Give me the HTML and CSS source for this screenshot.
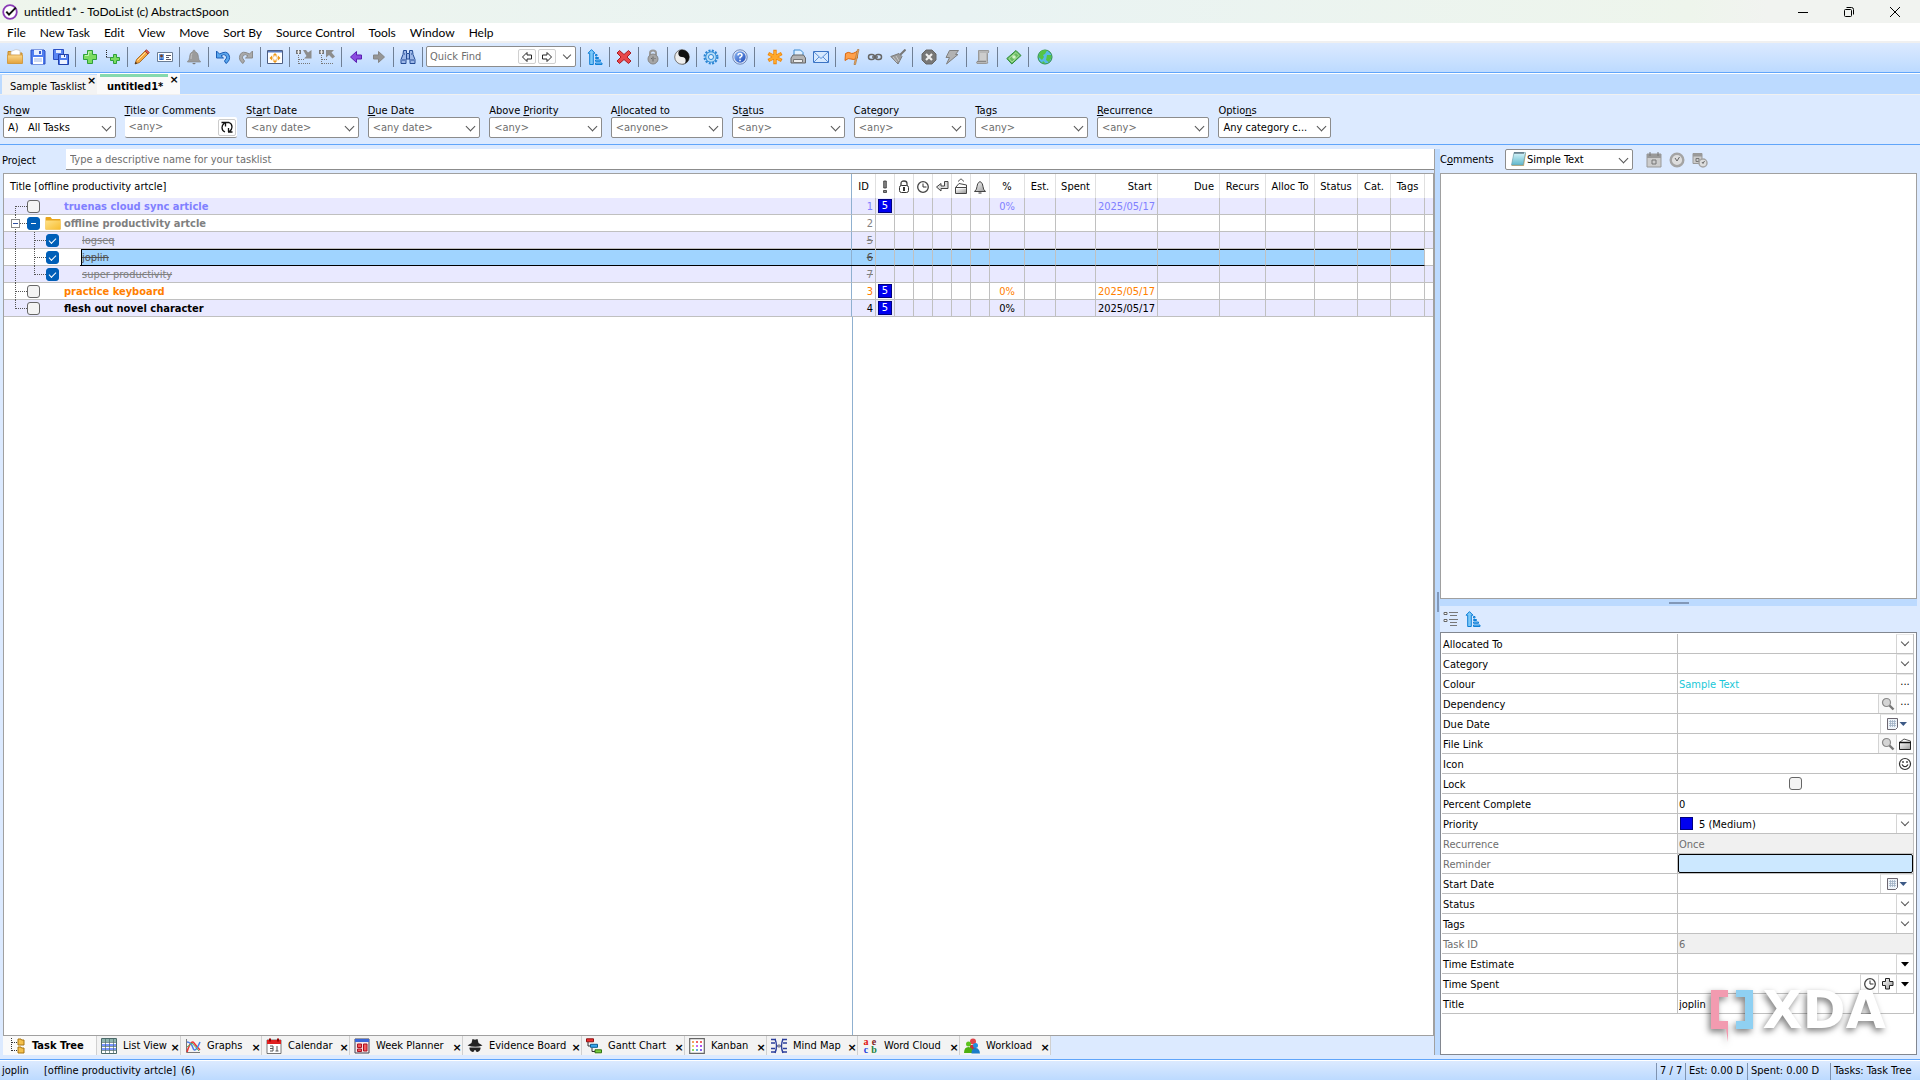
FILE: index.html
```html
<!DOCTYPE html>
<html lang="en">
<head>
<meta charset="utf-8">
<title>untitled1* - ToDoList (c) AbstractSpoon</title>
<link rel="stylesheet" href="styles.css">
</head>
<body>
<svg class="defs" width="0" height="0" aria-hidden="true">
  <defs>
    <linearGradient id="gFolder" x1="0" y1="0" x2="0" y2="1"><stop offset="0" stop-color="#fbd88c"/><stop offset="1" stop-color="#e3a23c"/></linearGradient>
    <linearGradient id="gYellow" x1="0" y1="0" x2="1" y2="1"><stop offset="0" stop-color="#ffe289"/><stop offset="1" stop-color="#f7bd2f"/></linearGradient>
    <linearGradient id="gGray" x1="0" y1="0" x2="1" y2="1"><stop offset="0" stop-color="#fff"/><stop offset="1" stop-color="#999"/></linearGradient>
    <linearGradient id="gBlue" x1="0" y1="0" x2="1" y2="1"><stop offset="0" stop-color="#8bb7f5"/><stop offset="1" stop-color="#1c49b8"/></linearGradient>
    <linearGradient id="gPad" x1="0" y1="0" x2="0" y2="1"><stop offset="0" stop-color="#d9f6fb"/><stop offset="1" stop-color="#5fb8cc"/></linearGradient>
  </defs>
  <symbol id="app" viewBox="0 0 16 16"><circle cx="8" cy="8" r="6.800" fill="#fff" stroke="#8a3bb5" stroke-width="1.800"/><path d="M4.300 7.600 7 10.600 13.800 3.600" fill="none" stroke="#111" stroke-width="2"/></symbol>
  <symbol id="folder" viewBox="0 0 16 16"><path d="M1 2.500h5l1 1.500h8v10H1z" fill="#e9b04e" stroke="#c68a2a"/><path d="M4 6V2.500l5-2 4 1v5z" fill="#fff" stroke="#bbb" stroke-width=".6"/><path d="M.5 6h15v8.500H.5z" fill="url(#gFolder)" stroke="#d09434" stroke-width=".7"/></symbol>
  <symbol id="save" viewBox="0 0 16 16"><path d="M1 1h13l1 1v13H1z" fill="#4f7df0" stroke="#2a4fc4"/><path d="M4 1h8v5H4z" fill="#e6eeff"/><path d="M9 2h2v3H9z" fill="#3559c9"/><path d="M3 8h10v7H3z" fill="#fff"/><path d="M4 10h8M4 12h8" stroke="#9db4e8"/></symbol>
  <symbol id="saveall" viewBox="0 0 16 16"><path d="M.5.500h10v10H.5z" fill="#5a86f2" stroke="#2a4fc4"/><path d="M3 1h5v3H3z" fill="#e6eeff"/><path d="M5.500 5.500h10v10h-10z" fill="#4f7df0" stroke="#2242aa"/><path d="M8 6h5v3H8zM7 11h7v4H7z" fill="#eef3ff"/><path d="M11 6h1v2h-1z" fill="#2242aa"/></symbol>
  <symbol id="plus" viewBox="0 0 16 16"><path d="M5.500 1.500h5v4h4v5h-4v4h-5v-4h-4v-5h4z" fill="#7bdc5f" stroke="#2fa03a"/><path d="M6.500 3h3M3 6.500h3.500V3" stroke="#c4f5b2" fill="none"/></symbol>
  <symbol id="plussub" viewBox="0 0 16 16"><path d="M1.500 1v8M1.500 8.500H6" stroke="#222" stroke-dasharray="1 1" fill="none"/><path d="M8.500 5.500h3v3h3v3h-3v3h-3v-3h-3v-3h3z" fill="#7bdc5f" stroke="#2fa03a"/></symbol>
  <symbol id="pencil" viewBox="0 0 16 16"><path d="M1 15l1.500-4.500L11 2l3 3-8.500 8.500z" fill="#f4a840" stroke="#9c5a16" stroke-width=".8"/><path d="M11 2l1.500-1.300L15.300 3.500 14 5z" fill="#e65a4a" stroke="#8b2b22" stroke-width=".7"/><path d="M1 15l.7-2.200 1.500 1.500z" fill="#222"/><path d="M3.500 11.500l8-8" stroke="#ffe1a6"/></symbol>
  <symbol id="card" viewBox="0 0 16 16"><path d="M.5 3.500h15v9H.5z" fill="#fff" stroke="#6a7c94"/><path d="M2 5h5v6H2z" fill="#6aa2ea"/><circle cx="4.500" cy="7" r="1.400" fill="#7a3c1c"/><path d="M2.500 11q2-3 4 0z" fill="#1b4fb0"/><path d="M9 6.500h5M9 8.500h3M9 10.500h5" stroke="#556"/></symbol>
  <symbol id="bell" viewBox="0 0 16 16"><path d="M8 1q1 0 1 1.500 3.500 1 3.500 6 0 2.500 2 4v.5h-13v-.5q2-1.500 2-4 0-5 3.500-6Q7 1 8 1z" fill="#9b9b9b" stroke="#868686" stroke-width=".7"/><path d="M6 14h4l-2 1.500z" fill="#777"/><path d="M6 4.500Q5 6 5 10" stroke="#c4c4c4" fill="none"/></symbol>
  <symbol id="undo" viewBox="0 0 16 16"><path d="M1.500 2v7h7L6 6.800Q9 4.500 11 6.500T9.500 12l1.500 2.500Q16 11 14 6T4.500 5z" fill="#5aa7ee" stroke="#1c5db5"/></symbol>
  <symbol id="redo" viewBox="0 0 16 16"><path d="M14.500 2v7h-7L10 6.800Q7 4.500 5 6.500T6.500 12L5 14.500Q0 11 2 6t9.500-1z" fill="#aaa" stroke="#8b8b8b"/></symbol>
  <symbol id="maxi" viewBox="0 0 16 16"><path d="M.5 1.500h15v13H.5z" fill="#fff" stroke="#4d5d80"/><path d="M1 2h14v1.500H1z" fill="#5e7fc0"/><path d="M8 4l2.500 2.500h-5zM8 14l2.500-2.500h-5zM2.500 9 5 6.500v5zM13.500 9 11 6.500v5z" fill="#f09a18"/><circle cx="8" cy="9" r="2.400" fill="none" stroke="#f2b96a"/></symbol>
  <symbol id="expand" viewBox="0 0 16 16"><path d="M0 1h5v4H0z" fill="#777"/><path d="M1 3h3M2.500 1v4" stroke="#eee"/><path d="M2.500 6v9M3 10.500h5M3 14.500h12" stroke="#777" stroke-dasharray="1 1"/><path d="M7 1h3l2 2.500L15.500 1v8.500H8L10.500 7z" fill="#8d8d8d"/></symbol>
  <symbol id="collapse" viewBox="0 0 16 16"><path d="M0 1h5v4H0z" fill="#777"/><path d="M1 3h3M2.500 1v4" stroke="#eee"/><path d="M2.500 6v9M3 10.500h5M3 14.500h12" stroke="#777" stroke-dasharray="1 1"/><path d="M7 1h8l-2.500 2.500L16 7.500 13.500 9.500l-3.500-3.500L7 8.500z" fill="#8d8d8d"/></symbol>
  <symbol id="left" viewBox="0 0 16 16"><path d="M2.500 8 8.500 2.500v3.500h5v4h-5v3.500z" fill="#8a4be0" stroke="#5a1fb0"/></symbol>
  <symbol id="right" viewBox="0 0 16 16"><path d="M13.500 8 7.500 2.500v3.500h-5v4h5v3.500z" fill="#959595" stroke="#858585"/></symbol>
  <symbol id="binoc" viewBox="0 0 16 16"><path d="M3.500 1.500h3v3h3v-3h3l.5 4 2 5v4h-5v-4.500H6V14.500H1v-4l2-5z" fill="#9db8e8" stroke="#244b94"/><path d="M6.500 5v5M9.500 5v5M2 11h3M11 11h3M4 5h1M11 5h1" stroke="#244b94"/></symbol>
  <symbol id="sort" viewBox="0 0 16 16"><path d="M4.500.600 8 4.200H6.300v11.300H2.700V4.200H1z" fill="#7cc8f8" stroke="#0f7fd6"/><path d="M8.500 5.500h1.500v1.500H8.500zM8.500 8.500h3v1h-3zM8.500 11h5v1.300h-5zM8.500 14h6.500v1.500H8.500z" fill="#7cc8f8" stroke="#0f7fd6"/></symbol>
  <symbol id="del" viewBox="0 0 16 16"><path d="M3.500 1.500 8 5.500l4.500-4 2.500 2.500-4 4 4 4-2.500 2.500-4.500-4-4.500 4L1 12l4-4-4-4z" fill="#e8464a" stroke="#a81d24"/></symbol>
  <symbol id="lockg" viewBox="0 0 16 16"><path d="M5 8V4q0-2.500 3-2.500T11 4v4" fill="none" stroke="#999" stroke-width="2"/><circle cx="8" cy="10" r="5" fill="#a6a6a6" stroke="#858585"/><path d="M8 7.500v5M6 9.500h1M9.500 9.500h1" stroke="#666"/></symbol>
  <symbol id="yin" viewBox="0 0 16 16"><circle cx="8" cy="8" r="7.300" fill="#eee" stroke="#777"/><path d="M8 .7a7.300 7.300 0 0 1 0 14.600 3.650 3.650 0 0 0 0-7.300A3.650 3.650 0 0 1 8 .7z" fill="#111"/><circle cx="8" cy="4.500" r="1.200" fill="#111"/><circle cx="8" cy="11.500" r="1.200" fill="#eee"/></symbol>
  <symbol id="gear" viewBox="0 0 16 16"><circle cx="8" cy="8" r="6.300" fill="none" stroke="#2c86d4" stroke-width="2.400" stroke-dasharray="2 1.300"/><circle cx="8" cy="8" r="5.200" fill="#b5dcf8" stroke="#3c92da"/><circle cx="8" cy="8" r="2.500" fill="#e6f2ff" stroke="#2c86d4"/></symbol>
  <symbol id="help" viewBox="0 0 16 16"><circle cx="8" cy="8" r="7.200" fill="#dfe7f8" stroke="#7088b8"/><circle cx="8" cy="8" r="5.700" fill="url(#gBlue)"/><path d="M6 6.500q0-2 2-2t2 1.800Q10 7.500 8 8.500v1M8 10.700v1.500" stroke="#fff" stroke-width="1.500" fill="none"/></symbol>
  <symbol id="aster" viewBox="0 0 16 16"><path d="M8 .8v14.400M1.300 4.500l13.400 7M14.700 4.500l-13.400 7" stroke="#ee860c" stroke-width="3.400"/><path d="M8 1.800v12.400M2.200 5l11.600 6M13.800 5 2.200 11" stroke="#ffa92a" stroke-width="2"/></symbol>
  <symbol id="print" viewBox="0 0 16 16"><path d="M4 7V1h6.500L13 3.500V7z" fill="#dff0ff" stroke="#3a8ad0"/><path d="M1 9l2-3h10.500l2 3v5H1z" fill="#b4b4b4" stroke="#666"/><path d="M3.500 10.500h9v3h-9z" fill="#eee" stroke="#777"/></symbol>
  <symbol id="mail" viewBox="0 0 16 16"><path d="M.5 2.500h15v11H.5z" fill="#d6e9ff" stroke="#3c74c4"/><path d="M1 3l7 6.500L15 3M1 13l5-5M15 13l-5-5" fill="none" stroke="#5b90d8"/></symbol>
  <symbol id="flag" viewBox="0 0 16 16"><path d="M1.500 4.500q3-2 5-.5t7-2v7q-4 2.500-6.500 1T1 11.500z" fill="#ffa04a" stroke="#d9660e"/><path d="M13.500.500h1.500L11.500 15.500H10z" fill="#f6b066" stroke="#a8743c" stroke-width=".7"/></symbol>
  <symbol id="chain" viewBox="0 0 16 16"><g fill="none" stroke="#666" stroke-width="1.500"><rect x="1.500" y="5.500" width="6" height="5" rx="2.500"/><rect x="8.500" y="5.500" width="6" height="5" rx="2.500"/><path d="M5 8h6"/></g></symbol>
  <symbol id="broom" viewBox="0 0 16 16"><path d="M15.500.500 10 6" stroke="#777" stroke-width="2"/><path d="M.8 7.500 9 4.500l3 3L8 15z" fill="#9a9a9a" stroke="#7c7c7c"/><path d="M3 8l4 5M6 7l3 5" stroke="#c8c8c8"/></symbol>
  <symbol id="stop" viewBox="0 0 16 16"><path d="M5 1h6l4 4v6l-4 4H5l-4-4V5z" fill="#777" stroke="#666"/><path d="M5 5l6 6M11 5l-6 6" stroke="#eee" stroke-width="2.200"/></symbol>
  <symbol id="bolt" viewBox="0 0 16 16"><path d="M5.500 1.500h9l-3 4h2.500L2.500 15l3-6.500H2z" fill="#b2b2b2" stroke="#808080"/></symbol>
  <symbol id="scroll" viewBox="0 0 16 16"><path d="M3.500 1.500h10q1 1.500-1 3v8q1 2-1 2H2q-1.500-1.500 1.500-3z" fill="#b8b8b8" stroke="#999"/><path d="M5 4h6v7H5z" fill="#cdcdcd"/><path d="M2 12.500h9" stroke="#888"/></symbol>
  <symbol id="money" viewBox="0 0 16 16"><path d="M.8 9.500 10 1.500l5 5-9.200 8.500z" fill="#69bb62" stroke="#2c8a3a"/><path d="M3 9.500 10 3.500l3 3-7 6.500z" fill="none" stroke="#a9e09c"/><circle cx="8" cy="8" r="1.800" fill="#d3f3c8"/></symbol>
  <symbol id="globe" viewBox="0 0 16 16"><circle cx="8" cy="8" r="7" fill="#57b9e8" stroke="#2f8f3e"/><path d="M3 3q3-3 7-1.500L8 5 6 6l1 2-2 3-3.500-3zM10 6l4 0q1 4-2.500 7L9 11zM6 12l3 2.500-4-.5z" fill="#55c446"/></symbol>
  <symbol id="arrl" viewBox="0 0 12 12"><path d="M1.500 6 6 1.500V4h4.500v4H6v2.500z" fill="#fff" stroke="#222"/></symbol>
  <symbol id="arrr" viewBox="0 0 12 12"><path d="M10.500 6 6 1.500V4H1.500v4H6v2.500z" fill="#fff" stroke="#222"/></symbol>
  <symbol id="cycle" viewBox="0 0 14 14"><path d="M1.500 2.500H6M5.500 2.500v4M4.500 3Q2 5 2 7.500 2 11 5 12M12.500 12H8M8.500 12V8M9.500 11.500q2.500-2 2.500-4.500Q12 3.500 9 2.500H6" fill="none" stroke="#111" stroke-width="1.300"/></symbol>
  <symbol id="fold" viewBox="0 0 16 14"><path d="M.5 2q0-1 1-1h4l1.500 2H15q.5 0 .5.5V13q0 .5-.5.500H1q-.5 0-.5-.5z" fill="#e9a51c"/><path d="M.5 4.500h15V13q0 .5-.5.500H1q-.5 0-.5-.5z" fill="url(#gYellow)"/></symbol>
  <symbol id="hprio" viewBox="0 0 14 14"><path d="M5.700 1h2.600v7H5.700zM5.500 10.500h3v2h-3z" fill="#888" stroke="#333" stroke-width=".8"/></symbol>
  <symbol id="hlock" viewBox="0 0 14 14"><path d="M4 6V3.500Q4 1 7 1t3 2.500V6" fill="none" stroke="#444" stroke-width="1.300"/><rect x="2.500" y="5.500" width="9" height="7" rx="2" fill="#fff" stroke="#333"/><path d="M7 7v4" stroke="#333" stroke-width="2"/></symbol>
  <symbol id="hclock" viewBox="0 0 14 14"><circle cx="7" cy="7" r="5.300" fill="#fff" stroke="#444" stroke-width="1.300"/><path d="M7 3.500V7h3.500" fill="none" stroke="#333"/></symbol>
  <symbol id="hdep" viewBox="0 0 14 14"><path d="M9.500 1.500h3.500v7H6v2.500L1.500 7 6 3.500V6h3.500z" fill="#ddd" stroke="#444"/></symbol>
  <symbol id="hfile" viewBox="0 0 14 18"><path d="M4 3.500 7 .8l3 2.700" fill="none" stroke="#555"/><path d="M1.500 9.500 5 5.500l7.500 1.500v8.500h-11z" fill="#fff" stroke="#444"/><path d="M2 10.500h10V15H2z" fill="url(#gGray)"/><path d="M1.500 9.500h11" stroke="#444"/></symbol>
  <symbol id="hbell" viewBox="0 0 14 14"><path d="M7 1.500q3 1.500 3 5 0 3 2.500 5h-11q2.500-2 2.500-5 0-3.500 3-5z" fill="url(#gGray)" stroke="#444"/><path d="M5.500 13h3" stroke="#333"/></symbol>
  <symbol id="pad" viewBox="0 0 16 16"><path d="M3 2h12l-2 13H.5z" fill="#c9b07a"/><path d="M3 1.500h11.500L12 14H.5z" fill="url(#gPad)" stroke="#6c9fae" stroke-width=".6"/><path d="M4 1v2M6 1v2M8 1v2M10 1v2M12 1v2" stroke="#345"/></symbol>
  <symbol id="cdate" viewBox="0 0 16 16"><path d="M1 2h14v13H1z" fill="#ccc" stroke="#999"/><path d="M1 2h14v4H1z" fill="#999"/><path d="M4 0v4M12 0v4" stroke="#777"/><path d="M6 8h4v4H6z" fill="none" stroke="#777"/></symbol>
  <symbol id="ctime" viewBox="0 0 16 16"><circle cx="8" cy="8" r="6.300" fill="#ddd" stroke="#a4a4a4" stroke-width="2.400"/><path d="M6 6l2 3 2.500-4" fill="none" stroke="#666"/></symbol>
  <symbol id="cboth" viewBox="0 0 16 16"><path d="M1 1.500h9v10H1z" fill="#ccc" stroke="#999"/><path d="M1 1.500h9v3H1z" fill="#999"/><path d="M4 6.500h3v3H4z" fill="none" stroke="#777"/><circle cx="11" cy="11" r="4" fill="#ddd" stroke="#a4a4a4" stroke-width="1.500"/><path d="M10 10l1 1.500 1.500-2.500" fill="none" stroke="#666"/></symbol>
  <symbol id="cats" viewBox="0 0 16 16"><path d="M1 1.500h3v2H1zM1 8.500h3v2H1z" fill="#fff" stroke="#666"/><path d="M6 1.500h9M7 4.500h7M6 8.500h9M7 11.500h7M7 14.500h7" stroke="#777"/></symbol>
  <symbol id="mag" viewBox="0 0 14 14"><circle cx="5.500" cy="5.500" r="4" fill="#d4d4d4" stroke="#888" stroke-width="1.200"/><path d="M8.500 8.500l4 4" stroke="#777" stroke-width="2.400"/></symbol>
  <symbol id="cal" viewBox="0 0 20 12"><path d="M.5.500h10v9l-2 2h-8z" fill="#eef3f8" stroke="#6c6670"/><path d="M2 3.500h7M2 5.500h7M2 7.500h7M3.500 2v7M5.500 2v7M7.500 2v7" stroke="#9fb0c4" stroke-width=".8"/><path d="M12.500 4H20l-3.700 4z" fill="#3d5a86"/></symbol>
  <symbol id="browse" viewBox="0 0 14 14"><path d="M1.500 5.500 6 2l6.500 2v8h-11z" fill="#fff" stroke="#555"/><path d="M1.500 5.500h11v7h-11z" fill="url(#gGray)" stroke="#222"/><path d="M1 5.500h12" stroke="#111" stroke-width="1.500"/></symbol>
  <symbol id="smile" viewBox="0 0 14 14"><circle cx="7" cy="7" r="5.500" fill="#fff" stroke="#333" stroke-width="1.200"/><path d="M4 7.500q3 4.500 6 0M5 4v2M9 4v2" fill="none" stroke="#222" stroke-width="1.200"/></symbol>
  <symbol id="padd" viewBox="0 0 14 14"><path d="M4.500 1.500h4v3h3.500v4H8.500v3.500h-4V8.500H1.500v-4h3z" fill="url(#gGray)" stroke="#222"/></symbol>
  <symbol id="drop" viewBox="0 0 10 10"><path d="M1 3h8L5 7.500z" fill="#000"/></symbol>
  <symbol id="vtree" viewBox="0 0 16 16"><path d="M1.500 0v13M2 4.500h5M2 12.500h5" stroke="#333" stroke-dasharray="1 1"/><path d="M8 1h3l.5 1H14v5H8zM8 9h3l.5 1H14v5H8z" fill="#f4c04c" stroke="#a8740e"/></symbol>
  <symbol id="vlist" viewBox="0 0 16 16"><path d="M.5.500h15v15H.5z" fill="#fff" stroke="#4c6a6a"/><path d="M1 1h14v3H1z" fill="#8fb5ae"/><path d="M1 6h14v2H1zM1 10h14v2H1z" fill="#7a94ff"/><path d="M4.500 1v14M8.500 1v14M12.500 1v14M1 4.500h14M1 8.500h14M1 12.500h14" stroke="#4c6a6a" stroke-width=".7"/></symbol>
  <symbol id="vgraph" viewBox="0 0 16 16"><path d="M1.500 1v13.500H15" stroke="#777" fill="none"/><path d="M2 14Q6 1 9 5t6 7" stroke="#e33" stroke-width="1.500" fill="none"/><path d="M2 4q4 0 6 6t7-6" stroke="#4b7de8" stroke-width="1.500" fill="none"/><path d="M2 9l5-4 7 8" stroke="#49b06a" fill="none"/></symbol>
  <symbol id="vcal" viewBox="0 0 16 16"><path d="M1 2h14v13.500H1z" fill="#fff" stroke="#555" stroke-width=".8"/><path d="M1 2h14v4H1z" fill="#e02020"/><path d="M4 .500v3M12 .5v3" stroke="#900" stroke-width="2"/><path d="M4 8h3v5H4M4 10.500h3M11 8v5M9.500 13h3" stroke="#555" fill="none"/></symbol>
  <symbol id="vweek" viewBox="0 0 16 16"><path d="M1 1h14v14H1z" fill="#f4e9e9" stroke="#445"/><path d="M1 1h14v3H1z" fill="#3a67d8"/><path d="M3.500 6h4v3.500h-4zM9.500 6H13v7H9.500zM3.500 11h4v2.500h-4z" fill="#f25b5b" stroke="#a12"/></symbol>
  <symbol id="vevid" viewBox="0 0 16 16"><path d="M4.500 5 5.500 1l2.500.8L10.500 1l1 4 4 2.500q-7 2.500-15 0z" fill="#222"/><path d="M2.500 9.500h11v1.500q-1 3-3 3t-2-2H7.500q0 2-2 2t-3-3z" fill="#222"/></symbol>
  <symbol id="vgantt" viewBox="0 0 16 16"><path d="M.5.800h7v3h-7z" fill="#f03030" stroke="#8c1010"/><path d="M4.500 6.300h7v3h-7z" fill="#38a8f0" stroke="#0b5c92"/><path d="M9 11.800h6.500v3H9z" fill="#7ad040" stroke="#2f7410"/><path d="M2 4v4h2M6 10v3.500h3" fill="none" stroke="#333"/></symbol>
  <symbol id="vkan" viewBox="0 0 16 16"><path d="M.7.700h14.600v14.600H.7z" fill="#fff" stroke="#666" stroke-width="1.200"/><path d="M3 3h2v2H3z" fill="#f5a15e"/><path d="M7 3h2v2H7zM11 3h2v2h-2z" fill="#e66"/><path d="M3 7h2v2H3z" fill="#ec6"/><path d="M7 7h2v2H7z" fill="#c6e"/><path d="M11 7h2v2h-2z" fill="#a5e"/><path d="M3 11h2v2H3z" fill="#8d6"/><path d="M7 11h2v2H7z" fill="#6ad"/><path d="M11 11h2v2h-2z" fill="#86e"/></symbol>
  <symbol id="vmind" viewBox="0 0 16 16"><path d="M0 1.500h5M0 5h4M0 10.500h4M0 14h5M11 1.500h5M12 5h4M12 10.500h4M11 14h5" stroke="#2c3f9c" stroke-width="1.500"/><path d="M4 1q3 7 0 14M12 1q-3 7 0 14M5.500 8h5" stroke="#2c3f9c" fill="none" stroke-width="1.400"/><circle cx="8" cy="8" r="1.800" fill="#889"/></symbol>
  <symbol id="vwork" viewBox="0 0 16 16"><circle cx="9" cy="3.500" r="3" fill="#e0454a"/><path d="M6 7h6v5H6z" fill="#c83238"/><circle cx="4.500" cy="6" r="2.500" fill="#5cc41c"/><path d="M0 15q0-6 4.500-6T9 15z" fill="#4db010"/><circle cx="11.500" cy="7.500" r="2.500" fill="#1f90e0"/><path d="M7.500 15.500q0-5.500 4-5.500t4.500 5.500z" fill="#1a7cc8"/></symbol>
  <symbol id="xdamark" viewBox="0 0 42 52"><path d="M0 0h17v7H8v24h9v21L15 39H0z" fill="#f29bb0"/><path d="M25 0h17v39H25v-8h9V7h-9z" fill="#8fd0f2"/></symbol>
</svg>

<header class="titlebar">
  <svg><use href="#app"/></svg>
  <h1>untitled1* - ToDoList (c) AbstractSpoon</h1>
  <div class="winbtns">
    <button aria-label="Minimize"><svg width="12" height="12"><path d="M1 6.500h10" stroke="#000"/></svg></button>
    <button aria-label="Restore"><svg width="12" height="12" fill="none" stroke="#000"><rect x="1.500" y="3.500" width="7" height="7" rx="1"/><path d="M3.500 1.500h5q2 0 2 2v5"/></svg></button>
    <button aria-label="Close"><svg width="12" height="12"><path d="M1 1l10 10M11 1 1 11" stroke="#000"/></svg></button>
  </div>
</header>

<nav class="menubar">
  <button>File</button><button>New Task</button><button>Edit</button><button>View</button><button>Move</button><button>Sort By</button><button>Source Control</button><button>Tools</button><button>Window</button><button>Help</button>
</nav>

<div class="toolbar">
  <div class="tools">
    <button aria-label="Open"><svg><use href="#folder"/></svg></button><button aria-label="Save"><svg><use href="#save"/></svg></button><button aria-label="Save all"><svg><use href="#saveall"/></svg></button><i></i>
    <button aria-label="New task"><svg><use href="#plus"/></svg></button><button aria-label="New subtask"><svg><use href="#plussub"/></svg></button><i></i>
    <button aria-label="Edit title"><svg><use href="#pencil"/></svg></button><button aria-label="Edit icon"><svg><use href="#card"/></svg></button><i></i>
    <button aria-label="Reminder"><svg><use href="#bell"/></svg></button><i></i>
    <button aria-label="Undo"><svg><use href="#undo"/></svg></button><button aria-label="Redo"><svg><use href="#redo"/></svg></button><i></i>
    <button aria-label="Maximize tasklist"><svg><use href="#maxi"/></svg></button><i></i>
    <button aria-label="Expand"><svg><use href="#expand"/></svg></button><button aria-label="Collapse"><svg><use href="#collapse"/></svg></button><i></i>
    <button aria-label="Previous"><svg><use href="#left"/></svg></button><button aria-label="Next"><svg><use href="#right"/></svg></button><i></i>
    <button aria-label="Find tasks"><svg><use href="#binoc"/></svg></button><i></i>
    <div class="quickfind">
      <input type="text" placeholder="Quick Find" aria-label="Quick Find">
      <button aria-label="Find previous"><svg><use href="#arrl"/></svg></button><button aria-label="Find next"><svg><use href="#arrr"/></svg></button><span class="chev"></span>
    </div><i></i>
    <button aria-label="Sort"><svg><use href="#sort"/></svg></button><i></i>
    <button aria-label="Delete"><svg><use href="#del"/></svg></button><i></i>
    <button aria-label="Encrypt"><svg><use href="#lockg"/></svg></button><i></i>
    <button aria-label="Dark mode"><svg><use href="#yin"/></svg></button><i></i>
    <button aria-label="Preferences"><svg><use href="#gear"/></svg></button><i></i>
    <button aria-label="Help"><svg><use href="#help"/></svg></button><i></i>
  </div>
  <div class="tools tools-custom">
    <button aria-label="New"><svg><use href="#aster"/></svg></button><button aria-label="Print"><svg><use href="#print"/></svg></button><button aria-label="Email"><svg><use href="#mail"/></svg></button><i></i>
    <button aria-label="Flag"><svg><use href="#flag"/></svg></button><button aria-label="Link"><svg><use href="#chain"/></svg></button><button aria-label="Clean up"><svg><use href="#broom"/></svg></button><i></i>
    <button aria-label="Stop"><svg><use href="#stop"/></svg></button><button aria-label="Run"><svg><use href="#bolt"/></svg></button><i></i>
    <button aria-label="Log"><svg><use href="#scroll"/></svg></button><i></i>
    <button aria-label="Donate"><svg><use href="#money"/></svg></button><i></i>
    <button aria-label="Web site"><svg><use href="#globe"/></svg></button>
  </div>
</div>

<div class="filetabs">
  <div class="filetab"><button>Sample Tasklist</button><button class="x" aria-label="Close Sample Tasklist">×</button></div>
  <div class="filetab active"><button>untitled1*</button><button class="x" aria-label="Close untitled1">×</button></div>
</div>

<form class="filters">
  <div class="field"><label for="f1">Sh<u>o</u>w</label><div class="combo dark"><select id="f1"><option>A) &nbsp; All Tasks</option></select></div></div>
  <div class="field"><label for="f2"><u>T</u>itle or Comments</label><div class="searchbox"><input id="f2" type="text" placeholder="&lt;any&gt;"><button type="button" aria-label="Refresh"><svg><use href="#cycle"/></svg></button></div></div>
  <div class="field"><label for="f3">St<u>a</u>rt Date</label><div class="combo"><select id="f3"><option>&lt;any date&gt;</option></select></div></div>
  <div class="field"><label for="f4"><u>D</u>ue Date</label><div class="combo"><select id="f4"><option>&lt;any date&gt;</option></select></div></div>
  <div class="field"><label for="f5">Above <u>P</u>riority</label><div class="combo"><select id="f5"><option>&lt;any&gt;</option></select></div></div>
  <div class="field"><label for="f6">A<u>l</u>located to</label><div class="combo"><select id="f6"><option>&lt;anyone&gt;</option></select></div></div>
  <div class="field"><label for="f7">St<u>a</u>tus</label><div class="combo"><select id="f7"><option>&lt;any&gt;</option></select></div></div>
  <div class="field"><label for="f8">Cate<u>g</u>ory</label><div class="combo"><select id="f8"><option>&lt;any&gt;</option></select></div></div>
  <div class="field"><label for="f9">Ta<u>g</u>s</label><div class="combo"><select id="f9"><option>&lt;any&gt;</option></select></div></div>
  <div class="field"><label for="f10"><u>R</u>ecurrence</label><div class="combo"><select id="f10"><option>&lt;any&gt;</option></select></div></div>
  <div class="field"><label for="f11">Optio<u>n</u>s</label><div class="combo dark"><select id="f11"><option>Any category c...</option></select></div></div>
</form>

<main class="workspace">
  <section class="left">
    <div class="project"><label for="proj">Pro<u>j</u>ect</label><input id="proj" type="text" placeholder="Type a descriptive name for your tasklist"></div>
    <div class="tree">
      <table>
        <colgroup><col><col class="c-id"><col class="c-i" span="6"><col class="c-pc"><col class="c-est"><col class="c-sp"><col class="c-dt" span="2"><col class="c-rec"><col class="c-al"><col class="c-st"><col class="c-cat"><col class="c-tag"><col class="c-end"></colgroup>
        <thead><tr><th class="t">Title [offline productivity artcle]</th><th>ID</th><th><svg><use href="#hprio"/></svg></th><th><svg><use href="#hlock"/></svg></th><th><svg><use href="#hclock"/></svg></th><th><svg><use href="#hdep"/></svg></th><th><svg class="tall"><use href="#hfile"/></svg></th><th><svg><use href="#hbell"/></svg></th><th>%</th><th>Est.</th><th>Spent</th><th class="r">Start</th><th class="r">Due</th><th>Recurs</th><th>Alloc To</th><th>Status</th><th>Cat.</th><th>Tags</th><th></th></tr></thead>
        <tbody>
          <tr class="violet"><td class="t"><div class="node"><span class="rail first"></span><input type="checkbox" aria-label="truenas cloud sync article"><b>truenas cloud sync article</b></div></td><td>1</td><td><em>5</em></td><td></td><td></td><td></td><td></td><td></td><td>0%</td><td></td><td></td><td>2025/05/17</td><td></td><td></td><td></td><td></td><td></td><td></td><td></td></tr>
          <tr class="gray"><td class="t"><div class="node"><span class="rail"><button class="toggle" aria-label="Collapse task"></button></span><input type="checkbox" class="mixed" aria-label="offline productivity artcle"><svg class="fold"><use href="#fold"/></svg><b>offline productivity artcle</b></div></td><td>2</td><td></td><td></td><td></td><td></td><td></td><td></td><td></td><td></td><td></td><td></td><td></td><td></td><td></td><td></td><td></td><td></td><td></td></tr>
          <tr class="gray done"><td class="t"><div class="node"><span class="rail pass"></span><span class="rail sub"></span><input type="checkbox" checked aria-label="logseq"><span class="name">logseq</span></div></td><td>5</td><td></td><td></td><td></td><td></td><td></td><td></td><td></td><td></td><td></td><td></td><td></td><td></td><td></td><td></td><td></td><td></td><td></td></tr>
          <tr class="gray done selected"><td class="t"><div class="node"><span class="rail pass"></span><span class="rail sub"></span><input type="checkbox" checked aria-label="joplin"><span class="name">joplin</span></div></td><td>6</td><td></td><td></td><td></td><td></td><td></td><td></td><td></td><td></td><td></td><td></td><td></td><td></td><td></td><td></td><td></td><td></td><td></td></tr>
          <tr class="gray done"><td class="t"><div class="node"><span class="rail pass"></span><span class="rail sub last"></span><input type="checkbox" checked aria-label="super productivity"><span class="name">super productivity</span></div></td><td>7</td><td></td><td></td><td></td><td></td><td></td><td></td><td></td><td></td><td></td><td></td><td></td><td></td><td></td><td></td><td></td><td></td><td></td></tr>
          <tr class="orange"><td class="t"><div class="node"><span class="rail"></span><input type="checkbox" aria-label="practice keyboard"><b>practice keyboard</b></div></td><td>3</td><td><em>5</em></td><td></td><td></td><td></td><td></td><td></td><td>0%</td><td></td><td></td><td>2025/05/17</td><td></td><td></td><td></td><td></td><td></td><td></td><td></td></tr>
          <tr><td class="t"><div class="node"><span class="rail last"></span><input type="checkbox" aria-label="flesh out novel character"><b>flesh out novel character</b></div></td><td>4</td><td><em>5</em></td><td></td><td></td><td></td><td></td><td></td><td>0%</td><td></td><td></td><td>2025/05/17</td><td></td><td></td><td></td><td></td><td></td><td></td><td></td></tr>
        </tbody>
      </table>
      <div class="blank"><div></div><div></div></div>
    </div>
    <nav class="views">
      <div class="view active"><svg><use href="#vtree"/></svg><button>Task Tree</button></div>
      <div class="view"><svg><use href="#vlist"/></svg><button>List View</button><button class="x" aria-label="Close">×</button></div>
      <div class="view"><svg><use href="#vgraph"/></svg><button>Graphs</button><button class="x" aria-label="Close">×</button></div>
      <div class="view"><svg><use href="#vcal"/></svg><button>Calendar</button><button class="x" aria-label="Close">×</button></div>
      <div class="view"><svg><use href="#vweek"/></svg><button>Week Planner</button><button class="x" aria-label="Close">×</button></div>
      <div class="view"><svg><use href="#vevid"/></svg><button>Evidence Board</button><button class="x" aria-label="Close">×</button></div>
      <div class="view"><svg><use href="#vgantt"/></svg><button>Gantt Chart</button><button class="x" aria-label="Close">×</button></div>
      <div class="view"><svg><use href="#vkan"/></svg><button>Kanban</button><button class="x" aria-label="Close">×</button></div>
      <div class="view"><svg><use href="#vmind"/></svg><button>Mind Map</button><button class="x" aria-label="Close">×</button></div>
      <div class="view"><span class="cloud"><span>a</span><span>e</span><span>c</span><span>b</span></span><button>Word Cloud</button><button class="x" aria-label="Close">×</button></div>
      <div class="view"><svg><use href="#vwork"/></svg><button>Workload</button><button class="x" aria-label="Close">×</button></div>
    </nav>
  </section>

  <div class="splitter"><span></span></div>

  <section class="side">
    <div class="commentbar"><label for="fmt">C<u>o</u>mments</label><div class="combo dark pad"><svg><use href="#pad"/></svg><select id="fmt"><option>Simple Text</option></select></div><button aria-label="Insert date"><svg><use href="#cdate"/></svg></button><button aria-label="Insert time"><svg><use href="#ctime"/></svg></button><button aria-label="Insert date and time"><svg><use href="#cboth"/></svg></button></div>
    <textarea class="comments" aria-label="Comments"></textarea>
    <div class="hsplit"><span></span></div>
    <div class="propbar"><button aria-label="Group attributes"><svg><use href="#cats"/></svg></button><button aria-label="Sort attributes"><svg><use href="#sort"/></svg></button></div>
    <div class="props">
      <div class="prop"><label for="p1">Allocated To</label><div><input id="p1"><button aria-label="Open list"><span class="chev"></span></button></div></div>
      <div class="prop"><label for="p2">Category</label><div><input id="p2"><button aria-label="Open list"><span class="chev"></span></button></div></div>
      <div class="prop"><label for="p3">Colour</label><div><input id="p3" class="cyan" value="Sample Text"><button class="dots">...</button></div></div>
      <div class="prop"><label for="p4">Dependency</label><div><input id="p4"><button aria-label="Go to" class="dim"><svg><use href="#mag"/></svg></button><button class="dots">...</button></div></div>
      <div class="prop"><label for="p5">Due Date</label><div><input id="p5"><button class="wide" aria-label="Pick date"><svg class="cal"><use href="#cal"/></svg></button></div></div>
      <div class="prop"><label for="p6">File Link</label><div><input id="p6"><button aria-label="View" class="dim"><svg><use href="#mag"/></svg></button><button aria-label="Browse"><svg><use href="#browse"/></svg></button></div></div>
      <div class="prop"><label for="p7">Icon</label><div><input id="p7"><button aria-label="Pick icon"><svg><use href="#smile"/></svg></button></div></div>
      <div class="prop"><label for="p8">Lock</label><div class="mid"><input id="p8" type="checkbox"></div></div>
      <div class="prop"><label for="p9">Percent Complete</label><div><input id="p9" value="0"></div></div>
      <div class="prop"><label for="p10">Priority</label><div><span class="swatch"></span><input id="p10" value="5 (Medium)"><button aria-label="Open list"><span class="chev"></span></button></div></div>
      <div class="prop off"><label for="p11">Recurrence</label><div class="fill"><input id="p11" value="Once" readonly></div></div>
      <div class="prop off"><label for="p12">Reminder</label><div class="focus"><input id="p12" readonly></div></div>
      <div class="prop"><label for="p13">Start Date</label><div><input id="p13"><button class="wide" aria-label="Pick date"><svg class="cal"><use href="#cal"/></svg></button></div></div>
      <div class="prop"><label for="p14">Status</label><div><input id="p14"><button aria-label="Open list"><span class="chev"></span></button></div></div>
      <div class="prop"><label for="p15">Tags</label><div><input id="p15"><button aria-label="Open list"><span class="chev"></span></button></div></div>
      <div class="prop off"><label for="p16">Task ID</label><div class="fill"><input id="p16" value="6" readonly></div></div>
      <div class="prop"><label for="p17">Time Estimate</label><div><input id="p17"><button aria-label="Units"><svg class="s10"><use href="#drop"/></svg></button></div></div>
      <div class="prop"><label for="p18">Time Spent</label><div><input id="p18"><button aria-label="Track time" class="tool"><svg><use href="#hclock"/></svg></button><button aria-label="Add time" class="tool"><svg><use href="#padd"/></svg></button><button aria-label="Units"><svg class="s10"><use href="#drop"/></svg></button></div></div>
      <div class="prop"><label for="p19">Title</label><div><input id="p19" value="joplin"></div></div>
      <div class="brand"><svg><use href="#xdamark"/></svg><span>XDA</span></div>
    </div>
  </section>
</main>

<footer class="status">
  <span class="s-title">joplin</span><span class="s-path">[offline productivity artcle]</span><span class="s-id">(6)</span>
  <span class="cell s-count">7 / 7</span><span class="cell s-est">Est: 0.00 D</span><span class="cell s-spent">Spent: 0.00 D</span><span class="cell s-view">Tasks: Task Tree</span>
</footer>
</body>
</html>
```
FILE: styles.css
```css
:root {
  --pale: #dceaff;
  --mid: #bcdaff;
  --line: #60a5fa;
  --edge: #8c8c8c;
  --grid: #c0c0c0;
}
* { box-sizing: border-box; }
body {
  margin: 0;
  min-height: 100vh;
  display: flex;
  flex-direction: column;
  background: var(--pale);
  color: #000;
  font: 11px/14px Tahoma, "DejaVu Sans Condensed", "DejaVu Sans", sans-serif;
}
button, input, select, textarea { font: inherit; color: inherit; margin: 0; padding: 0; border: 0; background: none; border-radius: 0; outline: 0; }
button { display: flex; align-items: center; justify-content: center; white-space: nowrap; }
input { min-width: 0; }
input::placeholder { color: #6e6e6e; opacity: 1; }
svg { display: block; flex: none; width: 16px; height: 16px; }
u { text-underline-offset: 1px; }
.defs { position: absolute; width: 0; height: 0; }

.titlebar, .menubar { font: 12px/16px "Segoe UI", Lato, "Open Sans", sans-serif; }
.titlebar { display: flex; align-items: center; height: 23px; padding-left: 2px; gap: 6px; background: linear-gradient(90deg, #eef5ec, #e9f3f3 50%, #eef5ec 88%, #f1f3f0 92%); }
.titlebar h1 { margin: 0; font: inherit; }
.winbtns { display: flex; margin-left: auto; margin-right: 2px; }
.winbtns button { width: 46px; height: 20px; }
.winbtns svg { width: 12px; height: 12px; }

.menubar { display: flex; height: 20px; background: #fff; border-bottom: 2px solid #f0f0f0; }
.menubar button { padding: 1px 7px 0; }

.toolbar { display: flex; height: 30px; padding: 0 4px 2px 3px; align-items: center; background: linear-gradient(#dceaff, #bcdaff); border-bottom: 1px solid var(--line); }
.tools { display: flex; align-items: center; }
.tools > button { width: 23px; height: 24px; }
.tools > i { width: 6px; height: 20px; background: linear-gradient(#6f7f95, #6f7f95) 3px 0 / 1px 100% no-repeat; }
.tools-custom { padding-left: 6px; }
.tools-custom > i { width: 8px; }
.quickfind { display: flex; align-items: center; width: 150px; height: 21px; margin: 0 1px; padding-left: 3px; background: #fff; border: 1px solid var(--edge); border-radius: 2px; }
.quickfind input { flex: 1; }
.quickfind button { width: 18px; height: 15px; margin-left: 2px; background: #fdfdfd; border: 1px solid #d0d0d0; border-radius: 2px; }
.quickfind button svg { width: 12px; height: 12px; }
.quickfind .chev { margin: 0 5px 4px 8px; }
.chev { display: block; width: 6px; height: 6px; border: solid #555; border-width: 0 1px 1px 0; transform: rotate(45deg); }

.filetabs { display: flex; align-items: flex-end; height: 22px; padding: 0 2px; border-top: 1px solid #fff; background: var(--mid); border-bottom: 1px solid #f0f0f0; }
.filetab { display: flex; align-items: flex-start; width: 95px; height: 19px; background: #f3f3f3; padding-left: 8px; }
.filetab > button:first-child { height: 19px; padding-top: 4px; flex: 1; justify-content: flex-start; }
.filetab .x { height: 12px; width: 12px; }
.filetab.active { width: 83px; height: 20px; background: #fafafa; font-weight: bold; padding-left: 0; }
.filetab.active > button:first-child { height: 20px; margin: 0 0 0 3px; padding: 2px 0 0 7px; border-top: 3px solid #86d9ae; }
.x { font: bold 11px/10px "DejaVu Sans", sans-serif; }

.filters { display: grid; grid-template-columns: repeat(11, minmax(0, 1fr)); gap: 9px; max-width: 1331px; height: 49px; padding: 8px 0 0 3px; }
.field { display: flex; flex-direction: column; }
.field label { white-space: nowrap; height: 14px; line-height: 16px; }
.combo { position: relative; display: flex; height: 21px; background: #fff; border: 1px solid var(--edge); border-radius: 2px; color: #6e6e6e; }
.combo.dark { color: #000; }
.combo select { appearance: none; flex: 1; min-width: 0; padding: 0 16px 0 4px; }
.combo::after { content: ""; position: absolute; right: 5px; top: 5px; width: 6px; height: 6px; border: solid #555; border-width: 0 1px 1px 0; transform: rotate(45deg); pointer-events: none; }
.searchbox { display: flex; height: 21px; align-items: center; background: #fff; border-bottom: 1px solid var(--edge); border-radius: 2px; padding: 0 1px 0 4px; }
.searchbox input { flex: 1; }
.searchbox button { width: 18px; height: 17px; border: 1px solid #ccc; border-radius: 2px; }
.searchbox svg { width: 14px; height: 14px; }

.workspace { flex: 1; display: flex; border-top: 1px solid var(--line); padding: 4px 3px 4px 0; }
.left { flex: 1; min-width: 0; display: flex; flex-direction: column; }
.project { display: flex; height: 21px; }
.project label { width: 66px; padding: 5px 2px 0; }
.project input { flex: 1; padding: 1px 4px 0; background: #fff; border-bottom: 1px solid var(--edge); }
.tree { flex: 1; display: flex; flex-direction: column; margin: 3px 0 0 3px; background: #fff; border: 1px solid #a0a0a0; }
table { width: 100%; table-layout: fixed; border-spacing: 0; }
.c-id { width: 24px; } .c-i { width: 19px; } .c-pc { width: 35px; } .c-est { width: 31px; } .c-sp { width: 40px; }
.c-dt { width: 62px; } .c-rec { width: 46px; } .c-al { width: 49px; } .c-st { width: 43px; } .c-cat { width: 33px; } .c-tag { width: 34px; } .c-end { width: 8px; }
th { height: 24px; padding: 2px 0 0; font-weight: normal; border-right: 1px solid #e0e0e0; white-space: nowrap; }
th svg { width: 14px; height: 14px; margin: 0 auto; }
th svg.tall { height: 18px; }
th.t { text-align: left; padding-left: 6px; }
th.t, td.t { border-right-color: #8fb0d0; }
th.r { text-align: right; padding-right: 5px; }
th:last-child, td:last-child { border-right: 0; }
td { height: 17px; padding: 2px 0 0; text-align: right; line-height: 14px; border: solid var(--grid); border-width: 0 1px 1px 0; white-space: nowrap; }
td.t { text-align: left; }
td.t, td:nth-child(3) { padding-top: 0; }
td:nth-child(2), td:nth-child(12) { padding-right: 2px; }
td:nth-child(9) { text-align: center; }
tbody tr:nth-child(odd) { background: #e9e9ff; }
td em { display: block; width: 14px; height: 14px; margin: 0 auto; background: #0000f0; border: 1px solid #000080; color: #fff; font-style: normal; line-height: 12px; text-align: center; }
.violet { color: #8080ff; } .gray { color: #808080; } .orange { color: #ff8000; }
.done td:nth-child(2), .done .name { text-decoration: line-through; }
.node { display: flex; align-items: center; height: 16px; padding-left: 11px; }
.rail { position: relative; flex: none; width: 12px; height: 16px; }
.rail::before { content: ""; position: absolute; left: 0; top: 0; bottom: -1px; border-left: 1px dotted #555; }
.rail::after { content: ""; position: absolute; left: 0; right: 0; top: 8px; border-top: 1px dotted #555; }
.rail.first::before { top: 8px; }
.rail.last::before { bottom: 7px; }
.rail.pass::after { display: none; }
.rail.pass { width: 19px; }
.toggle { position: absolute; z-index: 1; left: -4px; top: 4px; width: 9px; height: 9px; border: 1px solid #888; background: linear-gradient(#3050a0, #3050a0) center / 5px 1px no-repeat #fff; }
input[type=checkbox] { appearance: none; flex: none; display: grid; place-items: center; width: 13px; height: 13px; border: 1px solid #666; border-radius: 3px; background: #f4f4f4; }
input[type=checkbox]:checked, input[type=checkbox].mixed { background: #005fb8; border-color: #005fb8; }
input[type=checkbox]:checked::before { content: ""; width: 6px; height: 3px; border: solid #fff; border-width: 0 0 1px 1px; transform: rotate(-45deg); }
input.mixed::before { content: ""; width: 5px; height: 1px; background: #fff; }
.node b, .node .name { height: 16px; line-height: 18px; }
.node b { padding-left: 24px; }
.fold { width: 16px; height: 14px; margin-left: 5px; }
.node .fold + b { padding-left: 3px; }
.node .name { flex: 1; margin-left: 22px; padding-left: 1px; }
.selected td:not(.t):not(:last-child), .selected .name { background: #a0d4ff; box-shadow: inset 0 1px #000; border-bottom-color: #000; color: #505050; }
.selected td.t { border-bottom-color: #000; border-image: linear-gradient(90deg, #c0c0c0 77px, #000 77px) 1; border-width: 0 0 1px; }
.selected .name { box-shadow: inset 1px 1px #000; border-right: 1px solid #8fb0d0; }
.blank { flex: 1; display: flex; }
.blank div:first-child { flex: 1; border-right: 1px solid #8fb0d0; }
.blank div:last-child { width: 580px; }

.views { display: grid; grid-template-columns: 94px 84px 81px 88px 113px 119px 103px 82px 91px 102px 91px; height: 19px; padding-left: 3px; }
.view { display: flex; align-items: center; padding-left: 4px; background: #f3f3f3; border-right: 1px solid #d0d0d0; }
.view button:nth-child(2) { flex: 1; justify-content: flex-start; padding-left: 6px; }
.view.active { background: #fafafa; font-weight: bold; padding-left: 7px; }
.view .x { height: 10px; width: 10px; align-self: flex-end; margin-bottom: 2px; }
.cloud { display: grid; grid-template-columns: 8px 8px; width: 16px; font: bold 10px/8px "Liberation Serif", serif; color: #e01010; text-align: center; }
.cloud span:nth-child(2) { color: #802020; } .cloud span:nth-child(3) { color: #2040e0; } .cloud span:nth-child(4) { color: #208040; }

.splitter { width: 6px; display: grid; place-items: center; background: var(--mid); border-left: 1px solid #a0a0a0; }
.splitter span { width: 2px; height: 20px; background: #8298b8; }

.side { flex: 0 0 477px; display: flex; flex-direction: column; }
.commentbar { display: flex; align-items: center; height: 21px; }
.commentbar label { width: 65px; }
.commentbar button { width: 23px; }
.combo.pad { width: 128px; padding: 1px 0 0 5px; margin-right: 9px; }
.combo.pad select { padding-left: 0; height: 17px; }
.comments { flex: 1; margin-top: 3px; background: #fff; border: 1px solid #a0a0a0; resize: none; }
.hsplit { height: 7px; display: grid; place-items: center; background: var(--mid); }
.hsplit span { width: 20px; height: 2px; background: #8298b8; }
.propbar { display: flex; align-items: center; height: 26px; }
.propbar button { width: 22px; height: 22px; }
.props { position: relative; height: 423px; padding: 1px 2px 0 1px; background: #fff; border: 1px solid #828790; }
.prop { display: grid; grid-template-columns: 236px 1fr; height: 20px; border-bottom: 1px solid var(--grid); border-right: 1px solid var(--grid); }
.prop > label { padding: 4px 1px 0; border-right: 1px solid var(--grid); }
.prop > div { display: flex; align-items: center; min-width: 0; }
.prop input:not([type=checkbox]) { flex: 1; height: 17px; padding: 1px 0 0 1px; }
.prop button { width: 17px; height: 19px; border-left: 1px solid #d4d4d4; border-top: 1px solid #e8e8e8; }
.prop button.wide { width: 33px; }
.prop button.dim, .prop button.tool { width: 18px; }
.prop button.dim { background: #f8f8f8; }
.prop button svg { width: 14px; height: 14px; }
.prop button svg.cal { width: 20px; height: 12px; }
.prop button svg.s10 { width: 10px; height: 10px; }
.prop .chev { margin-bottom: 4px; }
.prop .dots { padding-bottom: 5px; }
.prop > .mid { justify-content: center; }
.prop .cyan { color: #18c8d8; }
.swatch { width: 13px; height: 13px; margin: 0 5px 0 2px; background: #0000f0; border: 1px solid #000080; }
.off > label, .off input { color: #6e6e6e; }
.prop > .fill { background: #f0f0f0; }
.prop > .focus { background: #cce8ff; border: 1px solid #000; border-radius: 2px; }
.brand { position: absolute; right: 30px; bottom: 12px; display: flex; gap: 10px; filter: drop-shadow(-2px 3px 3px rgba(0,0,0,.5)); pointer-events: none; }
.brand svg { width: 42px; height: 52px; }
.brand span { color: #fff; font: bold 52px/40px "DejaVu Sans", sans-serif; }

.status { display: flex; height: 21px; padding: 1px 2px 0; border-top: 1px solid var(--line); background: linear-gradient(#fff 1px, #dceaff 1px, #bcdaff); }
.status span { padding-top: 3px; white-space: nowrap; }
.s-title { width: 42px; } .s-path { width: 137px; } .s-id { flex: 1; }
.status .cell { margin-top: 2px; padding: 1px 0 0 3px; border-left: 1px solid #7f93b0; }
.s-count { width: 29px; } .s-est { width: 62px; } .s-spent { width: 83px; } .s-view { width: 88px; }
```
